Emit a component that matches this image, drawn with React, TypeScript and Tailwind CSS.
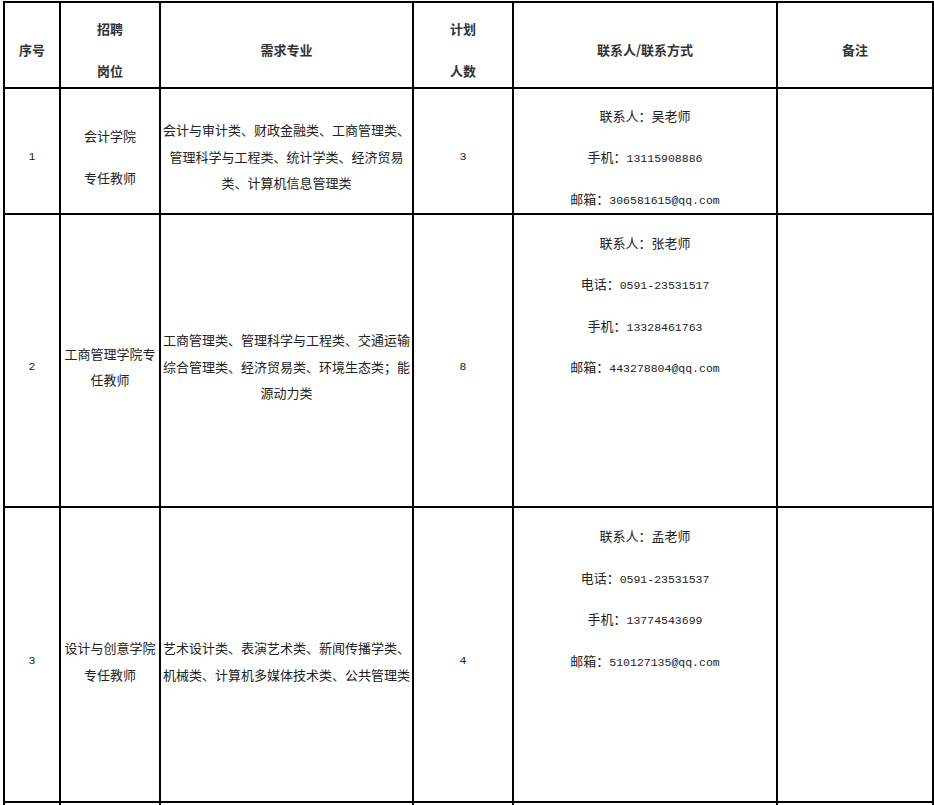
import React from "react";

const cell =
  "border-l-2 border-t-2 border-black flex flex-col items-center justify-center overflow-hidden text-center whitespace-nowrap";

function Mono({ children }: { children: React.ReactNode }) {
  return <span className="font-['Liberation_Mono',monospace] text-[11.5px] leading-none">{children}</span>;
}

type Contact = { label: string; value: string; mono: boolean };

function Contacts({ items, blanks }: { items: Contact[]; blanks: number }) {
  return (
    <div className="flex flex-col items-center">
      {items.map((c, i) => (
        <div key={i} className="h-[41.5px] flex items-center justify-center">
          <div className="leading-[20px]">
            {c.label}
            {c.mono ? <Mono>{c.value}</Mono> : c.value}
          </div>
        </div>
      ))}
      {Array.from({ length: blanks }).map((_, i) => (
        <div key={"b" + i} className="h-[41.5px]"></div>
      ))}
    </div>
  );
}

function Lines({ lines, lh }: { lines: string[]; lh: string }) {
  return (
    <div className={lh}>
      {lines.map((l, i) => (
        <div key={i}>{l}</div>
      ))}
    </div>
  );
}

export default function App() {
  return (
    <div className="bg-white w-[934px] h-[805px] overflow-hidden pt-[1px] pl-[3px] font-['Noto_Sans_CJK_SC',sans-serif] text-[13px] text-[#222]">
      <div className="grid grid-cols-[56px_100px_253px_100px_264px_156px] grid-rows-[86px_126px_293px_295px_100px] border-r-2 border-black w-[931px]">
        {/* header */}
        <div className={cell + " pt-[10px] font-bold text-[#333]"}>序号</div>
        <div className={cell + " pt-[10px] font-bold text-[#333]"}>
          <Lines lines={["招聘", "岗位"]} lh="leading-[42px]" />
        </div>
        <div className={cell + " pt-[10px] font-bold text-[#333]"}>需求专业</div>
        <div className={cell + " pt-[10px] font-bold text-[#333]"}>
          <Lines lines={["计划", "人数"]} lh="leading-[42px]" />
        </div>
        <div className={cell + " pt-[10px] font-bold text-[#333]"}>联系人/联系方式</div>
        <div className={cell + " pt-[10px] font-bold text-[#333]"}>备注</div>

        {/* row 1 */}
        <div className={cell + " pt-[12px]"}>
          <Mono>1</Mono>
        </div>
        <div className={cell + " pt-[12px]"}>
          <Lines lines={["会计学院", "专任教师"]} lh="leading-[42px]" />
        </div>
        <div className={cell + " pt-[12px]"}>
          <Lines
            lines={["会计与审计类、财政金融类、工商管理类、", "管理科学与工程类、统计学类、经济贸易", "类、计算机信息管理类"]}
            lh="leading-[26.5px]"
          />
        </div>
        <div className={cell + " pt-[12px]"}>
          <Mono>3</Mono>
        </div>
        <div className={cell + " pt-[12px]"}>
          <Contacts
            blanks={0}
            items={[
              { label: "联系人：", value: "吴老师", mono: false },
              { label: "手机：", value: "13115908886", mono: true },
              { label: "邮箱：", value: "306581615@qq.com", mono: true },
            ]}
          />
        </div>
        <div className={cell}></div>

        {/* row 2 */}
        <div className={cell + " pt-[13px]"}>
          <Mono>2</Mono>
        </div>
        <div className={cell + " pt-[13px]"}>
          <Lines lines={["工商管理学院专", "任教师"]} lh="leading-[26px]" />
        </div>
        <div className={cell + " pt-[13px]"}>
          <Lines
            lines={["工商管理类、管理科学与工程类、交通运输", "综合管理类、经济贸易类、环境生态类；能", "源动力类"]}
            lh="leading-[26.5px]"
          />
        </div>
        <div className={cell + " pt-[13px]"}>
          <Mono>8</Mono>
        </div>
        <div className={cell + " pt-[13px]"}>
          <Contacts
            blanks={3}
            items={[
              { label: "联系人：", value: "张老师", mono: false },
              { label: "电话：", value: "0591-23531517", mono: true },
              { label: "手机：", value: "13328461763", mono: true },
              { label: "邮箱：", value: "443278804@qq.com", mono: true },
            ]}
          />
        </div>
        <div className={cell}></div>

        {/* row 3 */}
        <div className={cell + " pt-[12px]"}>
          <Mono>3</Mono>
        </div>
        <div className={cell + " pt-[12px]"}>
          <Lines lines={["设计与创意学院", "专任教师"]} lh="leading-[27px]" />
        </div>
        <div className={cell + " pt-[12px]"}>
          <Lines
            lines={["艺术设计类、表演艺术类、新闻传播学类、", "机械类、计算机多媒体技术类、公共管理类"]}
            lh="leading-[27px]"
          />
        </div>
        <div className={cell + " pt-[12px]"}>
          <Mono>4</Mono>
        </div>
        <div className={cell + " pt-[12px]"}>
          <Contacts
            blanks={3}
            items={[
              { label: "联系人：", value: "孟老师", mono: false },
              { label: "电话：", value: "0591-23531537", mono: true },
              { label: "手机：", value: "13774543699", mono: true },
              { label: "邮箱：", value: "510127135@qq.com", mono: true },
            ]}
          />
        </div>
        <div className={cell}></div>

        {/* row 4 (partial) */}
        <div className={cell}></div>
        <div className={cell}></div>
        <div className={cell}></div>
        <div className={cell}></div>
        <div className={cell}></div>
        <div className={cell}></div>
      </div>
    </div>
  );
}
